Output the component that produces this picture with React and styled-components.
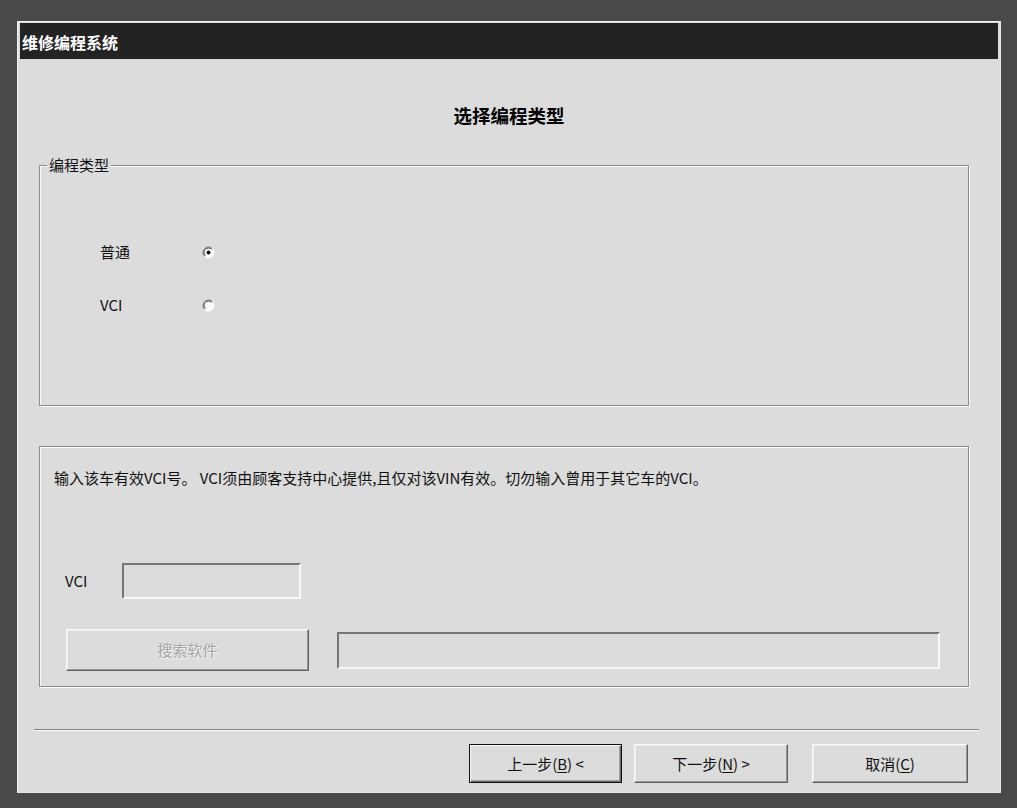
import React from "react";
import styled, { createGlobalStyle } from "styled-components";

const Global = createGlobalStyle`
  html, body { margin: 0; padding: 0; background: #494949; }
  body { font-family: "Noto Sans CJK SC", "Liberation Sans", sans-serif; color: #111; }
`;

const Screen = styled.div`
  width: 1017px;
  height: 808px;
  box-sizing: border-box;
  padding: 21px 0 0 17px;
  background: #494949;
  overflow: hidden;
`;

const Window = styled.div`
  width: 984px;
  height: 772px;
  box-sizing: border-box;
  background: #dcdcdc;
  border: 1px solid #f4f4f4;
  border-right-color: #e4e4e4;
  border-bottom-color: #e4e4e4;
  padding: 1px 2px 0 2px;
  display: flex;
  flex-direction: column;
`;

const TitleBar = styled.div`
  height: 36px;
  background: #232323;
  color: #fff;
  font-weight: 700;
  font-size: 16px;
  line-height: 36px;
  padding-left: 2px;
  padding-top: 1px;
  box-sizing: border-box;
  white-space: nowrap;
`;

const Heading = styled.div`
  margin-top: 44px;
  height: 24px;
  line-height: 24px;
  text-align: center;
  font-weight: 700;
  font-size: 18.5px;
  color: #000;
`;

const Group = styled.div`
  position: relative;
  margin: ${(p) => p.$top}px 0 0 19px;
  width: 930px;
  height: 241px;
  box-sizing: border-box;
  border: 1px solid #8c8c8c;
  box-shadow: inset 1px 1px 0 #fafafa, 1px 1px 0 #fafafa;
  display: flex;
  flex-direction: column;
`;

const Legend = styled.span`
  position: absolute;
  left: 7px;
  top: -11px;
  padding: 0 2px;
  background: #dcdcdc;
  font-size: 15px;
  line-height: 20px;
`;

const RadioList = styled.div`
  padding: 76px 0 0 60px;
  display: grid;
  grid-template-columns: 102px 14px;
  grid-auto-rows: 20px;
  row-gap: 33px;
  align-items: center;
`;

const Label = styled.span`
  font-size: 15px;
  line-height: 20px;
  white-space: nowrap;
`;

const RadioBox = styled.span`
  display: flex;
  width: 13px;
  height: 13px;
`;

function Radio({ checked }) {
  return (
    <RadioBox>
      <svg width="13" height="13" viewBox="0 0 13 13">
        <circle cx="6.5" cy="6.5" r="5.5" fill="#fbfbfb" />
        <path d="M2.6 10.4 A5.5 5.5 0 0 1 10.4 2.6" fill="none" stroke="#7c7c7c" strokeWidth="1" />
        <path d="M3.3 9.7 A4.5 4.5 0 0 1 9.7 3.3" fill="none" stroke="#3a3a3a" strokeWidth="1" />
        <path d="M10.4 2.6 A5.5 5.5 0 0 1 2.6 10.4" fill="none" stroke="#ffffff" strokeWidth="1" />
        {checked && <circle cx="6.5" cy="6.5" r="2" fill="#111" />}
      </svg>
    </RadioBox>
  );
}

const Notice = styled.div`
  padding: 21px 0 0 14px;
  font-size: 15px;
  line-height: 20px;
  white-space: nowrap;
`;

const FieldRow = styled.div`
  display: flex;
  align-items: center;
  margin-top: ${(p) => p.$top}px;
  padding-left: ${(p) => p.$left}px;
`;

const FieldLabel = styled.span`
  width: 57px;
  font-size: 15px;
  line-height: 20px;
`;

const Sunken = styled.div`
  width: ${(p) => p.$w}px;
  height: ${(p) => p.$h}px;
  margin-left: ${(p) => p.$ml || 0}px;
  box-sizing: border-box;
  border: 2px solid;
  border-color: #767676 #f8f8f8 #f8f8f8 #767676;
  background: #dcdcdc;
`;

const Button = styled.div`
  width: ${(p) => p.$w}px;
  height: ${(p) => p.$h}px;
  margin-left: ${(p) => p.$ml || 0}px;
  box-sizing: border-box;
  display: flex;
  align-items: center;
  justify-content: center;
  background: #dcdcdc;
  border: 1px solid;
  border-color: #fafafa #5e5e5e #5e5e5e #fafafa;
  box-shadow: inset -1px -1px 0 #9a9a9a, inset 1px 1px 0 #ececec;
  font-size: 15px;
  line-height: 20px;
  color: ${(p) => (p.$disabled ? "#a4a4a4" : "#111")};
  text-shadow: ${(p) => (p.$disabled ? "1px 1px 0 #f6f6f6" : "none")};
  white-space: nowrap;
`;

const DefaultButton = styled(Button)`
  border: 1px solid #111;
  box-shadow: inset 1px 1px 0 #fafafa, inset -1px -1px 0 #6a6a6a, inset -2px -2px 0 #a0a0a0;
`;

const Separator = styled.div`
  margin: 42px 0 0 14px;
  width: 945px;
  height: 2px;
  box-sizing: border-box;
  border-top: 1px solid #808080;
  border-bottom: 1px solid #fafafa;
`;

const ButtonBar = styled.div`
  margin-top: 13px;
  display: flex;
  justify-content: flex-end;
  padding-right: 30px;
  gap: 12px;
`;

const Key = styled.u`
  text-underline-offset: 2px;
`;

export default function App() {
  return (
    <>
      <Global />
      <Screen>
        <Window>
          <TitleBar>维修编程系统</TitleBar>
          <Heading>选择编程类型</Heading>
          <Group $top={38}>
            <Legend>编程类型</Legend>
            <RadioList>
              <Label>普通</Label>
              <Radio checked />
              <Label>VCI</Label>
              <Radio />
            </RadioList>
          </Group>
          <Group $top={40}>
            <Notice>输入该车有效VCI号。 VCI须由顾客支持中心提供,且仅对该VIN有效。切勿输入曾用于其它车的VCI。</Notice>
            <FieldRow $top={75} $left={25}>
              <FieldLabel>VCI</FieldLabel>
              <Sunken $w={179} $h={36} />
            </FieldRow>
            <FieldRow $top={30} $left={26}>
              <Button $w={243} $h={42} $disabled>搜索软件</Button>
              <Sunken $w={603} $h={37} $ml={28} />
            </FieldRow>
          </Group>
          <Separator />
          <ButtonBar>
            <DefaultButton $w={153} $h={39}>
              上一步(<Key>B</Key>) &lt;
            </DefaultButton>
            <Button $w={154} $h={39}>
              下一步(<Key>N</Key>) &gt;
            </Button>
            <Button $w={156} $h={39} $ml={12}>
              取消(<Key>C</Key>)
            </Button>
          </ButtonBar>
        </Window>
      </Screen>
    </>
  );
}
